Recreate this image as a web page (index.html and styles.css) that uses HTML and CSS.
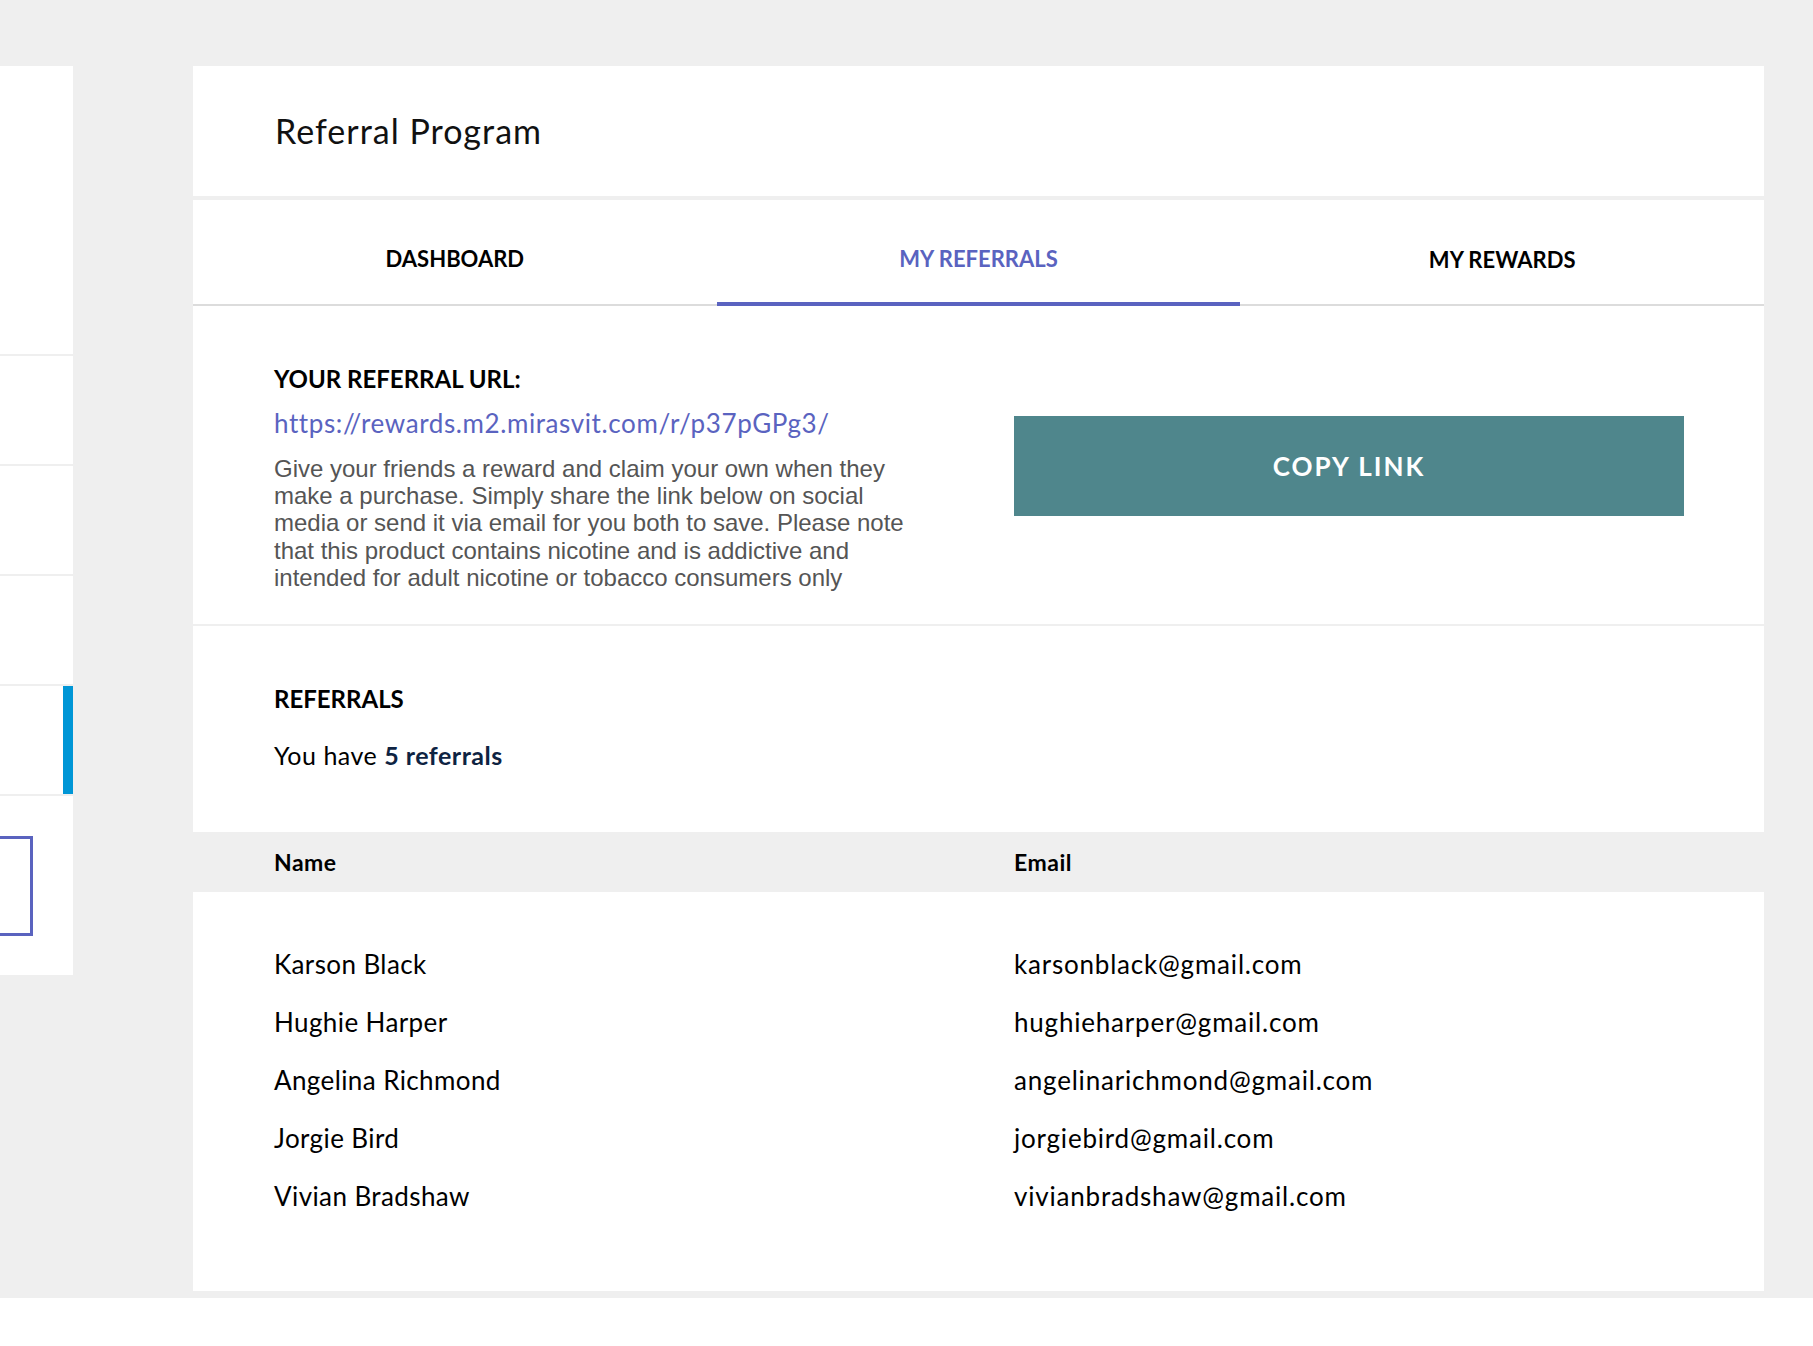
FILE: index.html
```html
<!DOCTYPE html>
<html lang="en">
<head>
<meta charset="utf-8">
<title>Referral Program</title>
<link rel="stylesheet" href="styles.css">
</head>
<body>
<div class="page">
  <aside class="sidebar">
    <div class="side-item side-top"></div>
    <div class="side-item"></div>
    <div class="side-item"></div>
    <div class="side-item"></div>
    <div class="side-item side-active"></div>
    <div class="side-item side-last"><div class="side-box"></div></div>
  </aside>
  <main class="main">
    <header class="card head-card">
      <h1 class="title">Referral Program</h1>
    </header>
    <div class="card body-card">
      <nav class="tabs">
        <a class="tab">DASHBOARD</a>
        <a class="tab tab-active">MY REFERRALS</a>
        <a class="tab tab-low">MY REWARDS</a>
      </nav>
      <section class="section url-section">
        <div class="url-col">
          <h2 class="label">YOUR REFERRAL URL:</h2>
          <a class="ref-url">https://rewards.m2.mirasvit.com/r/p37pGPg3/</a>
          <p class="desc">Give your friends a reward and claim your own when they make a purchase. Simply share the link below on social media or send it via email for you both to save. Please note that this product contains nicotine and is addictive and intended for adult nicotine or tobacco consumers only</p>
        </div>
        <div class="btn-col">
          <button class="copy-btn">COPY LINK</button>
        </div>
      </section>
      <section class="section ref-section">
        <h2 class="label">REFERRALS</h2>
        <p class="count">You have <strong>5 referrals</strong></p>
      </section>
      <div class="table">
        <div class="thead">
          <div class="th">Name</div>
          <div class="th">Email</div>
        </div>
        <div class="tbody">
          <div class="td">Karson Black</div><div class="td td-mail">karsonblack@gmail.com</div>
          <div class="td">Hughie Harper</div><div class="td td-mail">hughieharper@gmail.com</div>
          <div class="td">Angelina Richmond</div><div class="td td-mail">angelinarichmond@gmail.com</div>
          <div class="td">Jorgie Bird</div><div class="td td-mail">jorgiebird@gmail.com</div>
          <div class="td">Vivian Bradshaw</div><div class="td td-mail">vivianbradshaw@gmail.com</div>
        </div>
      </div>
    </div>
  </main>
</div>
</body>
</html>
```
FILE: styles.css
```css
* { box-sizing: border-box; }
html, body { margin: 0; padding: 0; background: #ffffff; }
body { font-family: Lato, "Noto Sans", sans-serif; color: #000; }

.page {
  background: #efefef;
  padding: 66px 50px 7px 0;
  display: flex;
  align-items: flex-start;
  gap: 120px;
}

/* sidebar */
.sidebar {
  width: 73px;
  flex: 0 0 73px;
  background: #ffffff;
  display: flex;
  flex-direction: column;
  overflow: hidden;
}
.side-item { height: 110px; border-bottom: 2px solid #efefef; }
.side-top { height: 290px; }
.side-active { box-shadow: inset -10px 0 0 #0096d6; }
.side-last { height: 179px; border-bottom: 0; padding-top: 40px; }
.side-box {
  width: 63px;
  height: 100px;
  margin-left: -30px;
  border: 3px solid #5a63bf;
}

/* main */
.main { flex: 1; display: flex; flex-direction: column; gap: 4px; }
.card { background: #fff; }
.head-card { height: 130px; padding: 45px 82px 0; }
.title { margin: 0; font-size: 34px; line-height: 40px; font-weight: 400; letter-spacing: 1px; color: #111; }

.tabs {
  display: grid;
  grid-template-columns: repeat(3, 1fr);
  border-bottom: 2px solid #dcdcdc;
  height: 106px;
}
.tab {
  position: relative;
  text-align: center;
  padding-top: 44px;
  font-size: 22px;
  line-height: 30px;
  font-weight: 700;
  color: #000;
}
.tab-low { padding-top: 45px; }
.tab-active { color: #5a63c0; }
.tab-active::after {
  content: "";
  position: absolute;
  left: 0; right: 0; bottom: -2px;
  height: 4px;
  background: #5a63c0;
}

.section { padding: 58px 80px 0 81px; }
.url-section {
  display: grid;
  grid-template-columns: 670px 670px;
  column-gap: 70px;
  padding-bottom: 33px;
  border-bottom: 2px solid #efefef;
}
.label { margin: 0; font-size: 24px; line-height: 30px; font-weight: 700; color: #000; }
.ref-url { display: block; margin-top: 14px; font-size: 26px; line-height: 30px; letter-spacing: 0.6px; color: #5a63c0; }
.desc {
  margin: 17px 0 0;
  max-width: 645px;
  font-family: "Liberation Sans", Arial, sans-serif;
  font-size: 24px;
  line-height: 27.2px;
  color: #555;
}
.btn-col { padding-top: 52px; }
.copy-btn {
  display: block;
  width: 670px;
  height: 100px;
  border: 0;
  background: #4f868c;
  color: #fff;
  font-family: Lato, "Noto Sans", sans-serif;
  font-size: 26px;
  font-weight: 700;
  letter-spacing: 2px;
}

.ref-section { padding-bottom: 62px; }
.count { margin: 26px 0 0; font-size: 25px; line-height: 30px; letter-spacing: 0.5px; }
.count strong { color: #0e2342; font-weight: 700; }

.thead, .tbody {
  display: grid;
  grid-template-columns: 670px 670px;
  column-gap: 70px;
  padding: 0 80px 0 81px;
}
.thead { background: #efefef; height: 60px; }
.th { font-size: 23px; line-height: 60px; font-weight: 700; letter-spacing: 0.5px; }
.tbody { padding-top: 43px; padding-bottom: 66px; }
.td { font-size: 26px; line-height: 58px; letter-spacing: 0.4px; }
.td-mail { letter-spacing: 0.8px; }
```
